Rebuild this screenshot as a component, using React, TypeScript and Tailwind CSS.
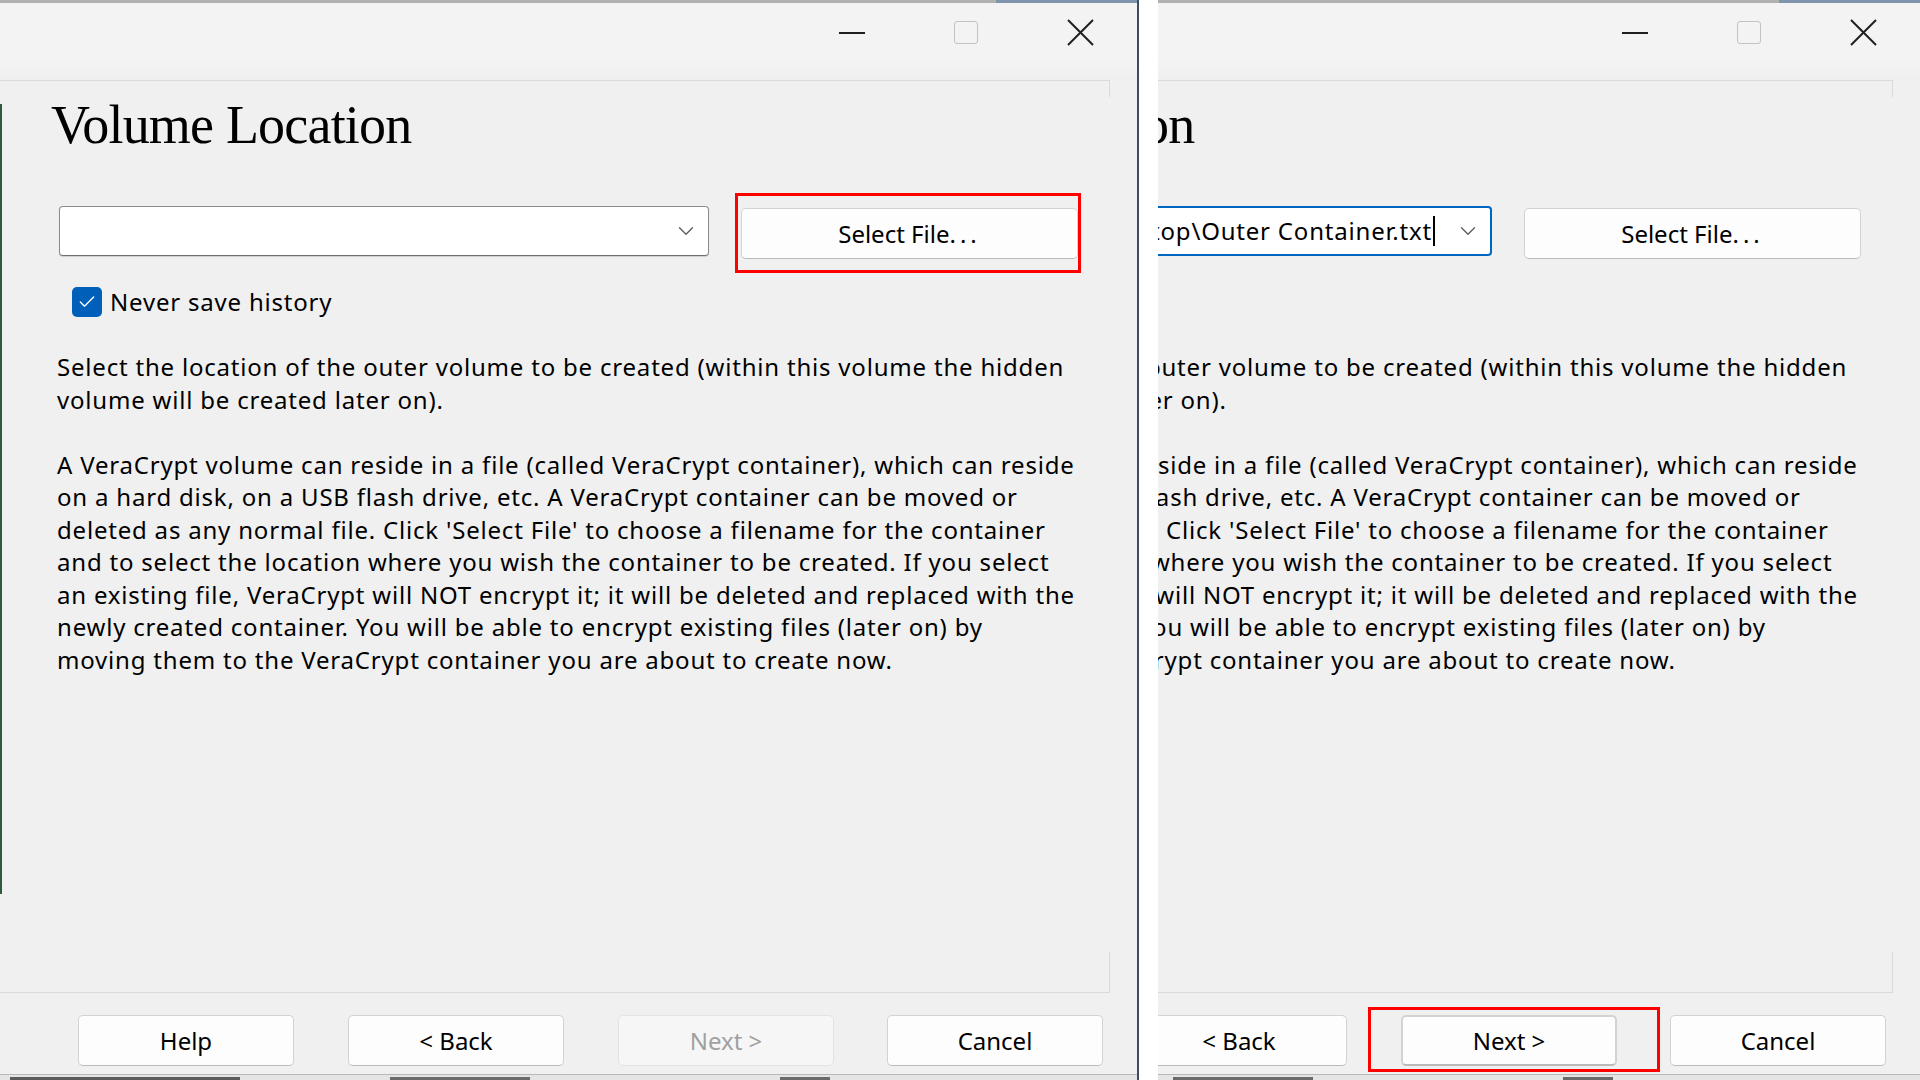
import { Check, ChevronDown } from "lucide-react"

const LINES = [
    "Select the location of the outer volume to be created (within this volume the hidden",
    "volume will be created later on).",
    "",
    "A VeraCrypt volume can reside in a file (called VeraCrypt container), which can reside",
    "on a hard disk, on a USB flash drive, etc. A VeraCrypt container can be moved or",
    "deleted as any normal file. Click 'Select File' to choose a filename for the container",
    "and to select the location where you wish the container to be created. If you select",
    "an existing file, VeraCrypt will NOT encrypt it; it will be deleted and replaced with the",
    "newly created container. You will be able to encrypt existing files (later on) by",
    "moving them to the VeraCrypt container you are about to create now.",
]

const btn =
    "h-[51px] w-[216px] rounded-[5px] border border-[#d3d3d3] border-b-[#bababa] bg-[#fdfdfd] text-[24px] leading-none text-black"

function TitleBar() {
    return (
        <div className="flex flex-col">
            {/* thin border strip at the very top */}
            <div className="flex h-[3px]">
                <div className="w-[996px] bg-[#b1b1b1]" />
                <div className="flex-1 bg-[#7f95ad]" />
            </div>
            <div className="flex h-[59px] justify-end bg-[#f3f3f3]">
                <div className="flex w-[114px] items-center justify-center">
                    <div className="h-[2px] w-[26px] bg-[#1f1f1f]" />
                </div>
                <div className="flex w-[114px] items-center justify-center">
                    <div className="h-[23px] w-[24px] rounded-[3px] border-[1.5px] border-[#c2c2c2]" />
                </div>
                <div className="flex w-[114px] items-center justify-center">
                    <svg width="27" height="27" viewBox="0 0 27 27" fill="none" stroke="#1f1f1f" strokeWidth="2">
                        <path d="M1 1L26 26M26 1L1 26" />
                    </svg>
                </div>
            </div>
            <div className="h-[18px] bg-gradient-to-b from-[#f3f3f3] to-[#efefef]" />
        </div>
    )
}

function Dialog({ side }: { side: "left" | "right" }) {
    const right = side === "right"
    return (
        <div className="relative flex h-[1074px] w-[1137px] flex-col bg-[#f0f0f0] font-['Noto_Sans',sans-serif] text-black">
            <TitleBar />

            {/* wizard page frame */}
            <div className="relative flex h-[913px] w-[1110px] flex-col border-y border-[#dadada]">
                <div className="absolute right-0 top-0 h-[16px] w-px bg-[#dadada]" />
                <div className="absolute bottom-0 right-0 h-[40px] w-px bg-[#dadada]" />

                <h1 className="ml-[51px] mt-[17px] font-['Liberation_Serif','Times_New_Roman',serif] text-[54px] leading-[54px] tracking-[-0.8px]">
                    Volume Location
                </h1>

                <div className="mt-[54px] flex items-start">
                    <div
                        className={`ml-[59px] flex h-[50px] w-[650px] items-center rounded-[4px] bg-white ${
                            right
                                ? "border-2 border-[#0067c0]"
                                : "border border-[#8c8c8c] border-b-[#6e6e6e] shadow-[0_1px_1px_rgba(0,0,0,0.15)]"
                        }`}
                    >
                        <div className="flex min-w-0 flex-1 items-center justify-end overflow-hidden pr-[11px]">
                            {right && (
                                <>
                                    <span className="whitespace-nowrap text-[24px] leading-none tracking-[0.8px]">
                                        C:\Users\Admin\Desktop\Outer Container.txt
                                    </span>
                                    <span className="ml-[1px] h-[30px] w-[2px] bg-black" />
                                </>
                            )}
                        </div>
                        <div className="flex w-[44px] items-center justify-center">
                            <ChevronDown size={26} strokeWidth={1.3} color="#5f5f5f" />
                        </div>
                    </div>

                    <div className="relative ml-[32px] mt-[2px]">
                        <button className={`${btn} w-[337px] h-[50px]`}>
                            Select File<span className="tracking-[4px]">...</span>
                        </button>
                        {!right && (
                            <div className="pointer-events-none absolute -bottom-[14px] -left-[6px] -right-[3px] -top-[15px] border-[3px] border-[#ff0000]" />
                        )}
                    </div>
                </div>

                <div className="mt-[28px] flex h-[30px] items-center">
                    <div className="ml-[72px] flex h-[30px] w-[30px] items-center justify-center rounded-[5px] bg-[#005fb8]">
                        <Check size={20} strokeWidth={1.6} color="white" />
                    </div>
                    <span className="ml-[8px] text-[24px] leading-none tracking-[0.8px]">Never save history</span>
                </div>

                <div className="ml-[57px] mt-[34px] flex flex-col text-[24px] leading-[32.5px] tracking-[0.8px]">
                    {LINES.map((l, i) => (
                        <div key={i} className="h-[32.5px] whitespace-nowrap">
                            {l}
                        </div>
                    ))}
                </div>
            </div>

            <div className="mt-[22px] flex">
                <button className={`${btn} ml-[78px]`}>Help</button>
                <button className={`${btn} ml-[54px]`}>&lt; Back</button>
                <div className="relative ml-[54px]">
                    {right ? (
                        <button className={`${btn} border-2 border-[#0067c0] border-b-[#0067c0]`}>Next &gt;</button>
                    ) : (
                        <button className="h-[51px] w-[216px] rounded-[5px] border border-[#e3e3e3] bg-[#f6f6f6] text-[24px] leading-none text-[#a0a0a0]">
                            Next &gt;
                        </button>
                    )}
                    {right && (
                        <div className="pointer-events-none absolute -bottom-[6px] -left-[33px] -right-[43px] -top-[8px] border-[3px] border-[#ff0000]" />
                    )}
                </div>
                <button className={`${btn} ml-[53px]`}>Cancel</button>
            </div>

            {!right && <div className="absolute left-0 top-[104px] h-[790px] w-[2px] bg-[#2f5c3c]" />}
        </div>
    )
}

function BottomStrip() {
    return (
        <div className="flex h-[6px] items-end border-t border-[#b8b8b8] bg-[#e4e4e4]">
            <div className="ml-[10px] h-[3px] w-[230px] bg-[#5a5a5a]" />
            <div className="ml-[150px] h-[3px] w-[140px] bg-[#6a6a6a]" />
            <div className="ml-[250px] h-[3px] w-[50px] bg-[#6a6a6a]" />
        </div>
    )
}

export default function App() {
    return (
        <div className="flex h-[1080px] w-[1920px] overflow-hidden bg-white">
            <div className="flex w-[1139px] flex-col border-r-2 border-[#3d4b66]">
                <Dialog side="left" />
                <BottomStrip />
            </div>
            <div className="w-[19px] bg-white" />
            <div className="flex w-[762px] flex-col overflow-hidden">
                <div className="-ml-[375px] flex w-[1137px] flex-col">
                    <Dialog side="right" />
                    <BottomStrip />
                </div>
            </div>
        </div>
    )
}
